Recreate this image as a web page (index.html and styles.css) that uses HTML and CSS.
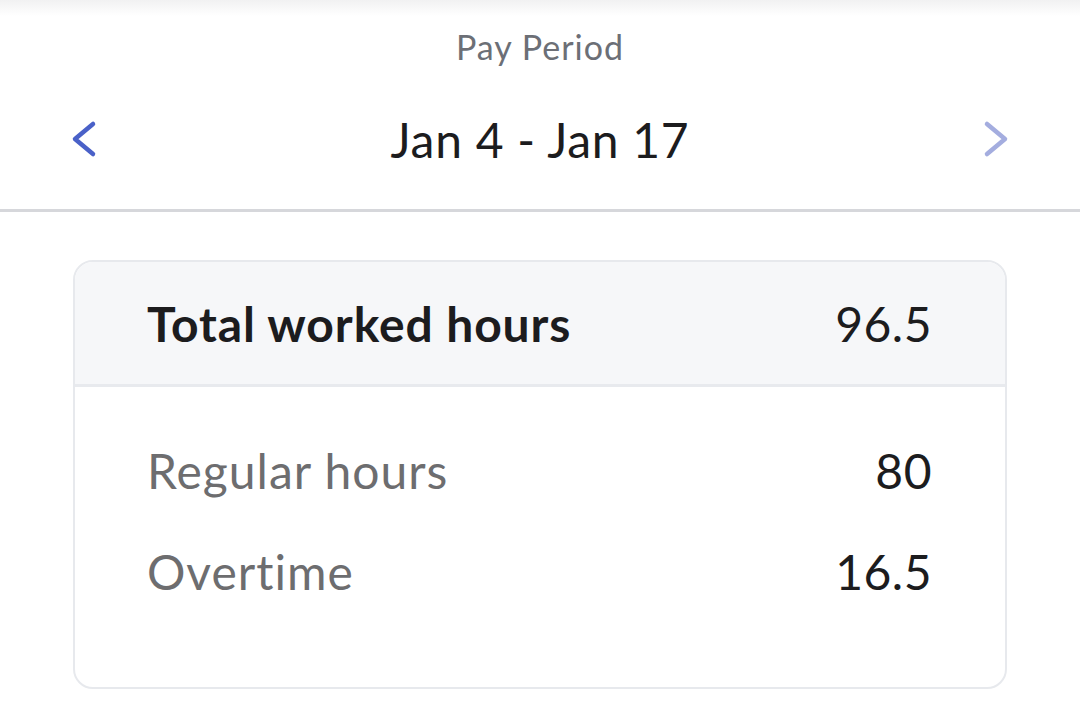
FILE: index.html
```html
<!DOCTYPE html>
<html lang="en">
<head>
    <meta charset="UTF-8">
    <meta name="viewport" content="width=device-width, initial-scale=1.0">
    <title>Pay Period</title>
    <link rel="stylesheet" href="styles.css">
</head>
<body>
    <div class="period">
        <div class="period-label">Pay Period</div>
        <div class="period-nav">
            <button class="nav-btn" type="button" aria-label="Previous period">
                <svg width="28" height="40" viewBox="0 0 28 40">
                    <path d="M23 5 L5 20 L23 35" fill="none" stroke="#4a61c8" stroke-width="4.5" stroke-linecap="round" stroke-linejoin="round"/>
                </svg>
            </button>
            <div class="period-range">Jan 4 - Jan 17</div>
            <button class="nav-btn" type="button" aria-label="Next period">
                <svg width="28" height="40" viewBox="0 0 28 40">
                    <path d="M5 5 L23 20 L5 35" fill="none" stroke="#a4addf" stroke-width="4.5" stroke-linecap="round" stroke-linejoin="round"/>
                </svg>
            </button>
        </div>
    </div>

    <div class="hours-card">
        <div class="hours-total">
            <span>Total worked hours</span>
            <span class="hours-value">96.5</span>
        </div>
        <div class="hours-list">
            <div class="hours-row">
                <span class="hours-name">Regular hours</span>
                <span class="hours-value">80</span>
            </div>
            <div class="hours-row">
                <span class="hours-name">Overtime</span>
                <span class="hours-value">16.5</span>
            </div>
        </div>
    </div>
</body>
</html>
```

FILE: styles.css
```css
body {
    margin: 0;
    background: #fff;
    font-family: Lato, "Open Sans", sans-serif;
    color: #1c1c1e;
}
.period {
    background: linear-gradient(#f1f1f2, #fff 16px);
    border-bottom: 3px solid #d6d7db;
    padding-bottom: 25px;
}
.period-label {
    height: 94px;
    line-height: 94px;
    text-align: center;
    font-size: 34px;
    letter-spacing: 1px;
    color: #6c6f76;
}
.period-nav {
    height: 90px;
    display: flex;
    align-items: center;
    justify-content: space-between;
    padding: 0 70px;
}
.nav-btn {
    border: none;
    background: none;
    padding: 0;
    width: 28px;
    height: 40px;
    display: flex;
}
.period-range {
    font-size: 48px;
    letter-spacing: 0.7px;
}
.hours-card {
    margin: 48px 73px 0;
    border: 2px solid #e7e9ed;
    border-radius: 20px;
    overflow: hidden;
}
.hours-total {
    height: 122px;
    background: #f6f7f9;
    border-bottom: 3px solid #e8eaee;
    display: flex;
    align-items: center;
    justify-content: space-between;
    padding: 0 73px 0 72px;
    font-size: 48px;
    letter-spacing: 0.9px;
}
.hours-total span:first-child {
    font-weight: 700;
}
.hours-list {
    padding: 33px 73px 65px 72px;
}
.hours-row {
    height: 101px;
    display: flex;
    align-items: center;
    justify-content: space-between;
    font-size: 48px;
    letter-spacing: 1px;
}
.hours-name {
    color: #6d6d6f;
}
.hours-value {
    color: #1c1c1e;
    letter-spacing: 0.5px;
}
```
